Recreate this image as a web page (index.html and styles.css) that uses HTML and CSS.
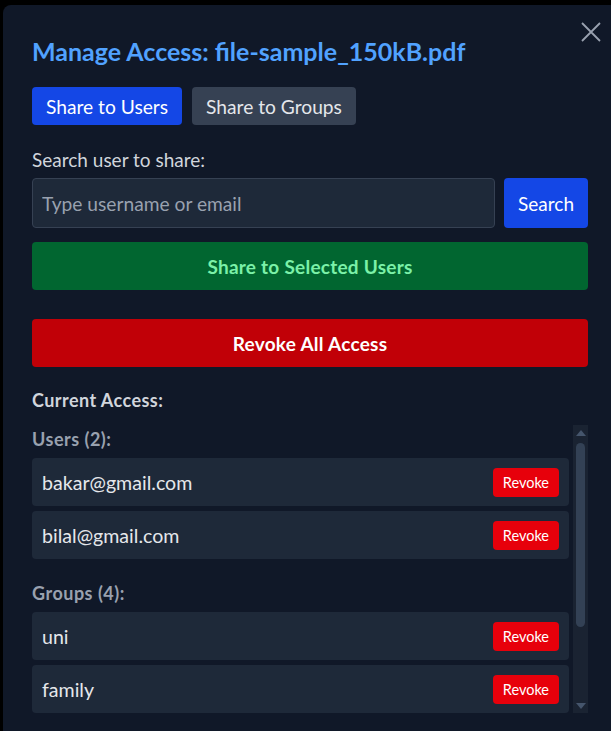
FILE: index.html
```html
<!DOCTYPE html>
<html lang="en">
<head>
<meta charset="utf-8">
<title>Manage Access</title>
<link rel="stylesheet" href="styles.css">
</head>
<body>
<div class="modal">
  <button class="close" aria-label="Close">
    <svg width="20" height="20" viewBox="0 0 20 20"><path d="M1 1 L19 19 M19 1 L1 19" stroke="#99a1af" stroke-width="1.8" fill="none"/></svg>
  </button>
  <h2 class="title">Manage Access: file-sample_150kB.pdf</h2>
  <div class="tabs">
    <button class="tab tab-active">Share to Users</button>
    <button class="tab tab-idle">Share to Groups</button>
  </div>
  <label class="label">Search user to share:</label>
  <div class="search-row">
    <input class="input" type="text" placeholder="Type username or email">
    <button class="btn-search">Search</button>
  </div>
  <button class="btn-wide btn-green">Share to Selected Users</button>
  <button class="btn-wide btn-red">Revoke All Access</button>
  <h3 class="section-title">Current Access:</h3>
  <div class="access">
    <div class="scroll">
      <h4 class="group-title">Users (2):</h4>
      <ul class="list">
        <li class="row"><span>bakar@gmail.com</span><button class="revoke">Revoke</button></li>
        <li class="row"><span>bilal@gmail.com</span><button class="revoke">Revoke</button></li>
      </ul>
      <h4 class="group-title group-gap">Groups (4):</h4>
      <ul class="list">
        <li class="row"><span>uni</span><button class="revoke">Revoke</button></li>
        <li class="row"><span>family</span><button class="revoke">Revoke</button></li>
        <li class="row"><span>friends</span><button class="revoke">Revoke</button></li>
        <li class="row"><span>work</span><button class="revoke">Revoke</button></li>
      </ul>
    </div>
    <div class="scrollbar" aria-hidden="true">
      <div class="sb-btn"><span class="sb-up"></span></div>
      <div class="sb-thumb"></div>
      <div class="sb-fill"></div>
      <div class="sb-btn"><span class="sb-down"></span></div>
    </div>
  </div>
</div>
</body>
</html>
```
FILE: styles.css
```css
* { box-sizing: border-box; }
html, body { margin: 0; padding: 0; }
body {
  background: #000;
  width: 611px;
  height: 731px;
  overflow: hidden;
  font-family: Lato, "Noto Sans", sans-serif;
}
.modal {
  position: relative;
  margin: 5px 0 0 3px;
  width: 640px;
  min-height: 760px;
  background: #101828;
  border-radius: 8px 0 0 0;
  padding: 30px 55px 0 29px;
  display: flex;
  flex-direction: column;
  align-items: stretch;
}
.close {
  position: absolute;
  left: 578px;
  top: 17px;
  width: 20px;
  height: 20px;
  padding: 0;
  border: 0;
  background: transparent;
}
.close svg { display: block; }
.title {
  margin: 0;
  font-size: 25px;
  line-height: 32px;
  letter-spacing: 0;
  font-weight: 700;
  color: #51a2ff;
}
.tabs {
  display: flex;
  gap: 10px;
  margin-top: 20px;
}
button { font-family: inherit; cursor: pointer; }
.tab {
  height: 38px;
  padding: 0 14px;
  border: 0;
  border-radius: 4px;
  font-size: 19.2px;
  color: #fff;
}
.tab-active { background: #1447e6; }
.tab-idle { background: #364153; color: #e5e7eb; }
.label {
  margin-top: 23px;
  font-size: 19px;
  line-height: 24px;
  color: #d1d5dc;
}
.search-row {
  display: flex;
  gap: 9px;
  margin-top: 6px;
}
.input {
  flex: 1;
  min-width: 0;
  height: 50px;
  background: #1e2939;
  border: 1px solid #364153;
  border-radius: 4px;
  padding: 0 9px;
  font-family: inherit;
  font-size: 19.2px;
  color: #e5e7eb;
  outline: none;
}
.input::placeholder { color: #99a1af; }
.btn-search {
  height: 50px;
  padding: 0 14px;
  border: 0;
  border-radius: 4px;
  background: #1447e6;
  color: #fff;
  font-size: 19px;
}
.btn-wide {
  height: 48px;
  border: 0;
  border-radius: 4px;
  font-size: 19px;
  letter-spacing: 0.25px;
  font-weight: 700;
}
.btn-green {
  margin-top: 14px;
  background: #016630;
  color: #7bf1a8;
}
.btn-red {
  margin-top: 29px;
  background: #c10007;
  color: #fff;
}
.section-title {
  margin: 21px 0 0;
  font-size: 18px;
  line-height: 24px;
  letter-spacing: 0.45px;
  font-weight: 700;
  color: #d1d5dc;
}
.access {
  margin-top: 13px;
  height: 288px;
  display: flex;
}
.scroll {
  flex: 1;
  min-width: 0;
  overflow: hidden;
  padding-right: 4px;
}
.group-title {
  margin: 0 0 5px;
  font-size: 18px;
  line-height: 28px;
  letter-spacing: 0.5px;
  font-weight: 700;
  color: #99a1af;
}
.group-gap { margin-top: 20px; }
.list {
  list-style: none;
  margin: 0;
  padding: 0;
  display: flex;
  flex-direction: column;
  gap: 5px;
}
.row {
  height: 48px;
  flex: none;
  background: #1e2939;
  border-radius: 4px;
  display: flex;
  align-items: center;
  justify-content: space-between;
  padding: 0 10px;
  font-size: 19.6px;
  color: #e5e7eb;
}
.revoke {
  height: 29px;
  padding: 0 10px;
  border: 0;
  border-radius: 4px;
  background: #e7000b;
  color: #fff;
  font-size: 14.5px;
}
.scrollbar {
  width: 15px;
  flex: none;
  background: #1a2332;
  display: flex;
  flex-direction: column;
  align-items: center;
}
.sb-btn {
  height: 15px;
  width: 15px;
  display: flex;
  align-items: center;
  justify-content: center;
}
.sb-up {
  width: 0;
  height: 0;
  border-left: 5px solid transparent;
  border-right: 5px solid transparent;
  border-bottom: 6px solid #45556c;
}
.sb-down {
  width: 0;
  height: 0;
  border-left: 5px solid transparent;
  border-right: 5px solid transparent;
  border-top: 6px solid #45556c;
}
.sb-thumb {
  margin-top: 3px;
  width: 9px;
  height: 184px;
  border-radius: 5px;
  background: #334155;
}
.sb-fill { flex: 1; }
```
